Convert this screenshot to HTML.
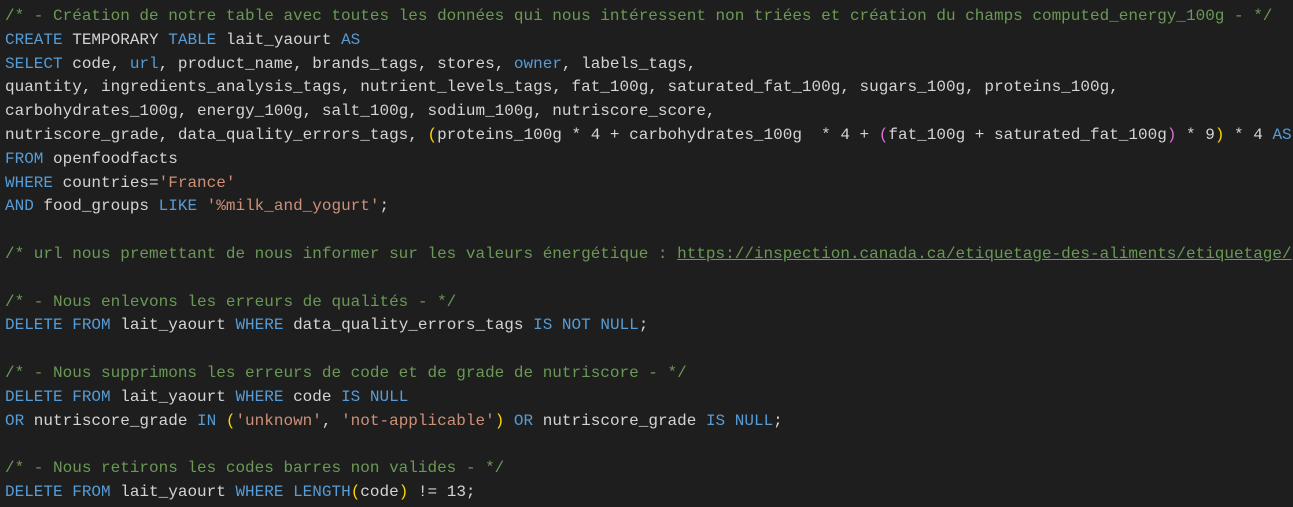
<!DOCTYPE html>
<html><head><meta charset="utf-8"><style>
html,body{margin:0;padding:0;background:#1e1e1e;width:1293px;height:507px;overflow:hidden}
pre{margin:0;position:absolute;left:5px;top:5px;font-family:"Liberation Mono",monospace;font-size:16px;line-height:23.8px;color:#d4d4d4;white-space:pre}
.c{color:#6a9955}.k{color:#569cd6}.s{color:#ce9178}.y{color:#ffd700}.p{color:#da70d6}.u{text-decoration:underline}
</style></head><body><pre><span class="c">/* - Création de notre table avec toutes les données qui nous intéressent non triées et création du champs computed_energy_100g - */</span>
<span class="k">CREATE</span> TEMPORARY <span class="k">TABLE</span> lait_yaourt <span class="k">AS</span>
<span class="k">SELECT</span> code, <span class="k">url</span>, product_name, brands_tags, stores, <span class="k">owner</span>, labels_tags,
quantity, ingredients_analysis_tags, nutrient_levels_tags, fat_100g, saturated_fat_100g, sugars_100g, proteins_100g,
carbohydrates_100g, energy_100g, salt_100g, sodium_100g, nutriscore_score,
nutriscore_grade, data_quality_errors_tags, <span class="y">(</span>proteins_100g * 4 + carbohydrates_100g  * 4 + <span class="p">(</span>fat_100g + saturated_fat_100g<span class="p">)</span> * 9<span class="y">)</span> * 4 <span class="k">AS</span>
<span class="k">FROM</span> openfoodfacts
<span class="k">WHERE</span> countries=<span class="s">'France'</span>
<span class="k">AND</span> food_groups <span class="k">LIKE</span> <span class="s">'%milk_and_yogurt'</span>;

<span class="c">/* url nous premettant de nous informer sur les valeurs énergétique : <span class="u">https://inspection.canada.ca/etiquetage-des-aliments/etiquetage/</span></span>

<span class="c">/* - Nous enlevons les erreurs de qualités - */</span>
<span class="k">DELETE</span> <span class="k">FROM</span> lait_yaourt <span class="k">WHERE</span> data_quality_errors_tags <span class="k">IS</span> <span class="k">NOT</span> <span class="k">NULL</span>;

<span class="c">/* - Nous supprimons les erreurs de code et de grade de nutriscore - */</span>
<span class="k">DELETE</span> <span class="k">FROM</span> lait_yaourt <span class="k">WHERE</span> code <span class="k">IS</span> <span class="k">NULL</span>
<span class="k">OR</span> nutriscore_grade <span class="k">IN</span> <span class="y">(</span><span class="s">'unknown'</span>, <span class="s">'not-applicable'</span><span class="y">)</span> <span class="k">OR</span> nutriscore_grade <span class="k">IS</span> <span class="k">NULL</span>;

<span class="c">/* - Nous retirons les codes barres non valides - */</span>
<span class="k">DELETE</span> <span class="k">FROM</span> lait_yaourt <span class="k">WHERE</span> <span class="k">LENGTH</span><span class="y">(</span>code<span class="y">)</span> != 13;</pre></body></html>
